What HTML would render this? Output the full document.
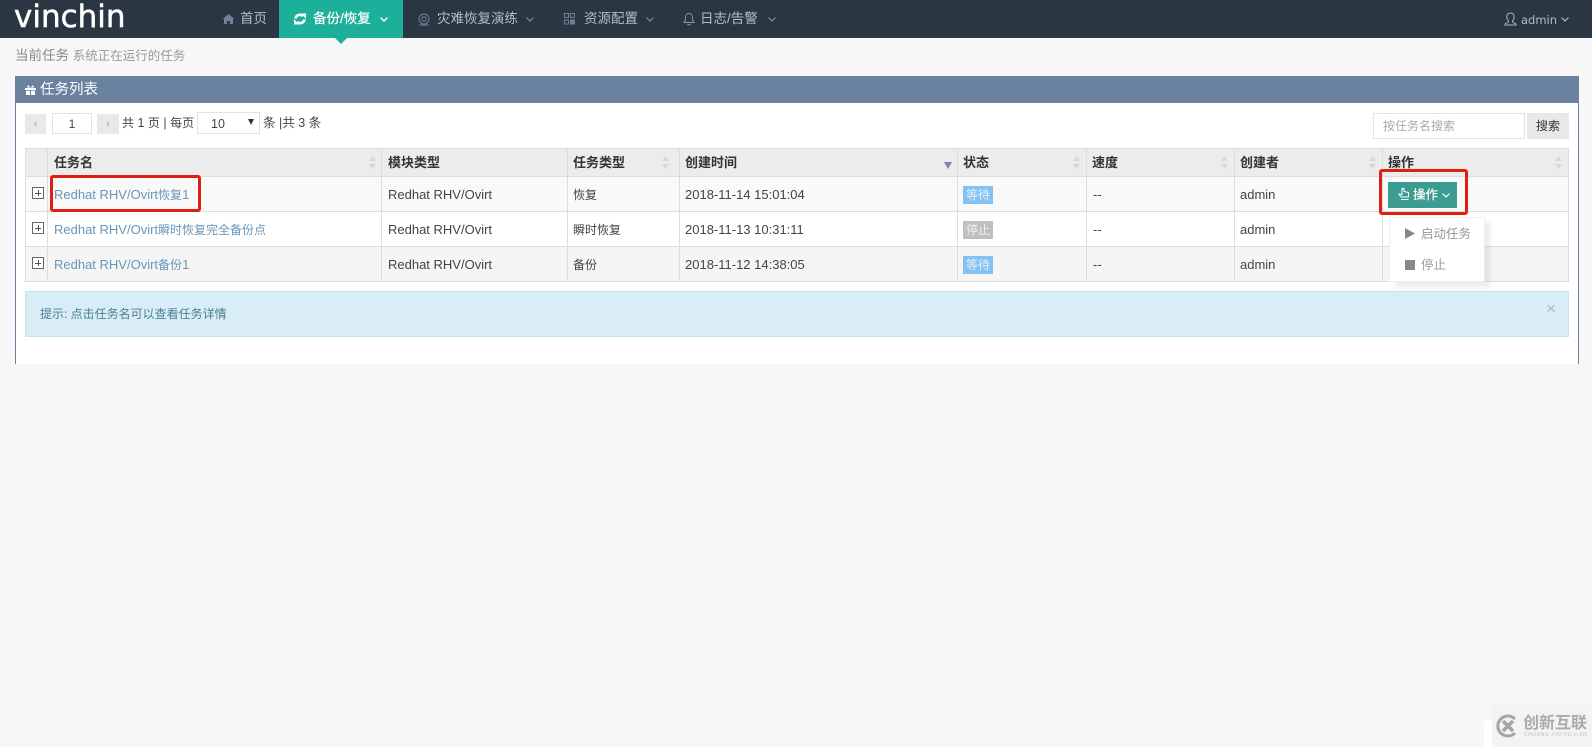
<!DOCTYPE html>
<html lang="zh">
<head>
<meta charset="utf-8">
<title>vinchin</title>
<style>
html,body{margin:0;padding:0}
body{width:1592px;height:747px;background:#f7f7f7;overflow:hidden;position:relative;font-family:"Liberation Sans","Noto Sans CJK SC",sans-serif;font-size:13px;color:#444}
.a{position:absolute;white-space:nowrap}
.nav{left:0;top:0;width:1592px;height:38px;background:#2b3643}
.nt{color:#b4bcc8;font-size:13.5px;line-height:38px;top:0}
.line{position:absolute;background:#ddd}
.th{font-weight:700;color:#333;top:154px;line-height:18px;font-size:13px}
.td{color:#444;line-height:18px}
.lnk{color:#6a96b8;line-height:18px}
.c{font-size:12px}
.bd{color:#e6f2fb;font-size:12px;line-height:18px;width:30px;height:18px;text-align:center;left:963px}
.pm{left:32px;width:10px;height:10px;border:1px solid #666;background:#fff;box-sizing:content-box}
.pm:before{content:"";position:absolute;left:2px;top:4.500px;width:6px;height:1px;background:#555}
.pm:after{content:"";position:absolute;left:4.500px;top:2px;width:1px;height:6px;background:#555}
svg{position:absolute;overflow:visible}
</style>
</head>
<body>
<div class="a nav"></div>
<div class="a" style="left:14px;top:-3px;font-size:31px;line-height:40px;color:#fff;font-family:'DejaVu Sans',sans-serif;-webkit-text-stroke:.5px #fff">vinchin</div>

<svg style="left:222px;top:13px" width="13" height="12" viewBox="0 0 13 12"><path d="M6.500 1 L0.500 6 L2 6 L2 11 L5 11 L5 8 L8 8 L8 11 L11 11 L11 6 L12.500 6 Z" fill="#6f8098"/></svg>
<div class="a nt" style="left:240px">首页</div>

<div class="a" style="left:279px;top:0;width:124px;height:38px;background:#1caf9a"></div>
<div class="a" style="left:335px;top:38px;width:0;height:0;border-left:6px solid transparent;border-right:6px solid transparent;border-top:6px solid #1caf9a"></div>
<svg style="left:293px;top:13px" width="14" height="12" viewBox="0 0 14 12"><path d="M2.500 5.500 A4.500 4.500 0 0 1 10 3 M11.500 6.500 A4.500 4.500 0 0 1 4 9" fill="none" stroke="#fff" stroke-width="2.600"/><path d="M8 0.500 L13 0.500 L13 6 Z M6 11.500 L1 11.500 L1 6 Z" fill="#fff"/></svg>
<div class="a nt" style="left:313px;color:#fff;font-size:13.500px;-webkit-text-stroke:.2px #fff">备份/恢复</div>
<svg style="left:380px;top:17px" width="8" height="5" viewBox="0 0 8 5"><path d="M.500 .500 L4 4 L7.500 .500" fill="none" stroke="#fff" stroke-width="1.400"/></svg>

<svg style="left:418px;top:13px" width="12" height="13" viewBox="0 0 12 13"><circle cx="6" cy="6" r="5" fill="none" stroke="#6f8098"/><circle cx="6" cy="6" r="2.200" fill="none" stroke="#6f8098"/><path d="M1 12 L11 12" stroke="#6f8098"/></svg>
<div class="a nt" style="left:437px">灾难恢复演练</div>
<svg style="left:526px;top:17px" width="8" height="5" viewBox="0 0 8 5"><path d="M.500 .500 L4 4 L7.500 .500" fill="none" stroke="#7f8b9a" stroke-width="1.200"/></svg>

<svg style="left:564px;top:13px" width="11" height="12" viewBox="0 0 11 12"><path d="M.500 .500 H4.500 V4.500 H.500 Z M6.500 .500 H10.500 V4.500 H6.500 Z M.500 7 H4.500 V11 H.500 Z" fill="none" stroke="#6f8098"/><path d="M6 6.500 H11 V11.500 H6 Z" fill="#6f8098"/></svg>
<div class="a nt" style="left:584px">资源配置</div>
<svg style="left:646px;top:17px" width="8" height="5" viewBox="0 0 8 5"><path d="M.500 .500 L4 4 L7.500 .500" fill="none" stroke="#7f8b9a" stroke-width="1.200"/></svg>

<svg style="left:683px;top:12px" width="12" height="14" viewBox="0 0 12 14"><path d="M1 10.500 C2.500 9 2.500 8 2.500 5.500 C2.500 3 4 1.500 6 1.500 C8 1.500 9.500 3 9.500 5.500 C9.500 8 9.500 9 11 10.500 Z M4.500 12 C5 13.200 7 13.200 7.500 12" fill="none" stroke="#8794a5"/></svg>
<div class="a nt" style="left:700px">日志/告警</div>
<svg style="left:768px;top:17px" width="8" height="5" viewBox="0 0 8 5"><path d="M.500 .500 L4 4 L7.500 .500" fill="none" stroke="#7f8b9a" stroke-width="1.200"/></svg>

<svg style="left:1504px;top:12px" width="13" height="14" viewBox="0 0 13 14"><path d="M4.500 9 C3 7.500 2.800 6 2.800 4.800 C2.800 2.500 4.300 1 6.500 1 C8.700 1 10.200 2.500 10.200 4.800 C10.200 6 10 7.500 8.500 9 L8.500 10 L12 12 L12 13 L1 13 L1 12 L4.500 10 Z" fill="none" stroke="#aeb7c3"/></svg>
<div class="a nt" style="left:1521px;top:1px;font-family:'DejaVu Sans',sans-serif;font-size:11.500px">admin</div>
<svg style="left:1561px;top:17px" width="8" height="5" viewBox="0 0 8 5"><path d="M.500 .500 L4 4 L7.500 .500" fill="none" stroke="#aeb7c3" stroke-width="1.200"/></svg>

<div class="a" style="left:15px;top:46px;line-height:20px;font-size:13.500px;color:#888">当前任务 <span style="font-size:12.500px;color:#999">系统正在运行的任务</span></div>

<div class="a" style="left:15px;top:76px;width:1564px;height:288px;background:#fff;box-sizing:border-box;border-left:1px solid #6a819f;border-right:1px solid #6a819f"></div>
<div class="a" style="left:15px;top:76px;width:1564px;height:27px;background:#6a819f"></div>
<svg style="left:25px;top:85px" width="11" height="10" viewBox="0 0 11 10"><path d="M0 3 H11 V5 H0 Z M1 5.800 H5 V10 H1 Z M6 5.800 H10 V10 H6 Z M3 0 L5.500 2.500 L8 0 L9 2.500 L2 2.500 Z" fill="#fff"/></svg>
<div class="a" style="left:40px;top:80px;color:#fff;font-size:14.500px;line-height:20px">任务列表</div>

<div class="a" style="left:25px;top:114px;width:21px;height:20px;background:#e9e9e9;color:#999;text-align:center;line-height:20px;font-size:11px">‹</div>
<div class="a" style="left:52px;top:113px;width:40px;height:21px;box-sizing:border-box;border:1px solid #e2e2e2;background:#fff;text-align:center;line-height:21px;font-size:12px;color:#444">1</div>
<div class="a" style="left:97px;top:114px;width:22px;height:20px;background:#e9e9e9;color:#999;text-align:center;line-height:20px;font-size:11px">›</div>
<div class="a td" style="left:122px;top:114px;font-size:12.500px"><span class="c">共</span> 1 <span class="c">页</span> | <span class="c">每页</span></div>
<div class="a" style="left:197px;top:112px;width:63px;height:22px;box-sizing:border-box;border:1px solid #e2e2e2;background:#fff;line-height:23px;font-size:12.500px;color:#444;padding-left:13px">10</div>
<div class="a" style="left:248px;top:119px;width:0;height:0;border-left:3.500px solid transparent;border-right:3.500px solid transparent;border-top:6px solid #333"></div>
<div class="a td" style="left:263px;top:114px;font-size:12.500px">条 |共 3 条</div>

<div class="a" style="left:1373px;top:113px;width:152px;height:26px;box-sizing:border-box;border:1px solid #e2e2e2;background:#fff;color:#aaa;font-size:12px;line-height:24px;padding-left:9px">按任务名搜索</div>
<div class="a" style="left:1527px;top:113px;width:42px;height:26px;background:#e8e8e8;color:#333;font-size:12px;line-height:26px;text-align:center">搜索</div>

<div class="a" style="left:25px;top:148px;width:1544px;height:29px;background:#ececec"></div>
<div class="a" style="left:25px;top:177px;width:1544px;height:34px;background:#f9f9f9"></div>
<div class="a" style="left:25px;top:212px;width:1544px;height:34px;background:#fff"></div>
<div class="a" style="left:25px;top:247px;width:1544px;height:34px;background:#f5f5f5"></div>

<div class="line" style="left:25px;top:148px;width:1544px;height:1px"></div>
<div class="line" style="left:25px;top:176px;width:1544px;height:1px"></div>
<div class="line" style="left:25px;top:211px;width:1544px;height:1px"></div>
<div class="line" style="left:25px;top:246px;width:1544px;height:1px"></div>
<div class="line" style="left:25px;top:281px;width:1544px;height:1px"></div>
<div class="line" style="left:25px;top:148px;width:1px;height:134px"></div>
<div class="line" style="left:47px;top:148px;width:1px;height:134px"></div>
<div class="line" style="left:381px;top:148px;width:1px;height:134px"></div>
<div class="line" style="left:567px;top:148px;width:1px;height:134px"></div>
<div class="line" style="left:679px;top:148px;width:1px;height:134px"></div>
<div class="line" style="left:957px;top:148px;width:1px;height:134px"></div>
<div class="line" style="left:1086px;top:148px;width:1px;height:134px"></div>
<div class="line" style="left:1234px;top:148px;width:1px;height:134px"></div>
<div class="line" style="left:1382px;top:148px;width:1px;height:134px"></div>
<div class="line" style="left:1568px;top:148px;width:1px;height:134px"></div>

<div class="a th" style="left:54px">任务名</div>
<div class="a th" style="left:388px">模块类型</div>
<div class="a th" style="left:573px">任务类型</div>
<div class="a th" style="left:685px">创建时间</div>
<div class="a th" style="left:963px">状态</div>
<div class="a th" style="left:1092px">速度</div>
<div class="a th" style="left:1240px">创建者</div>
<div class="a th" style="left:1388px">操作</div>

<svg style="left:369px;top:156px" width="7" height="13" viewBox="0 0 7 13"><path d="M3.500 0 L7 5 L0 5 Z M3.500 13 L7 8 L0 8 Z" fill="#d8d8d8"/></svg>
<svg style="left:662px;top:156px" width="7" height="13" viewBox="0 0 7 13"><path d="M3.500 0 L7 5 L0 5 Z M3.500 13 L7 8 L0 8 Z" fill="#d8d8d8"/></svg>
<svg style="left:1073px;top:156px" width="7" height="13" viewBox="0 0 7 13"><path d="M3.500 0 L7 5 L0 5 Z M3.500 13 L7 8 L0 8 Z" fill="#d8d8d8"/></svg>
<svg style="left:1221px;top:156px" width="7" height="13" viewBox="0 0 7 13"><path d="M3.500 0 L7 5 L0 5 Z M3.500 13 L7 8 L0 8 Z" fill="#d8d8d8"/></svg>
<svg style="left:1369px;top:156px" width="7" height="13" viewBox="0 0 7 13"><path d="M3.500 0 L7 5 L0 5 Z M3.500 13 L7 8 L0 8 Z" fill="#d8d8d8"/></svg>
<svg style="left:1555px;top:156px" width="7" height="13" viewBox="0 0 7 13"><path d="M3.500 0 L7 5 L0 5 Z M3.500 13 L7 8 L0 8 Z" fill="#d8d8d8"/></svg>
<svg style="left:944px;top:162px" width="8" height="7" viewBox="0 0 8 7"><path d="M0 0 H8 L4 7 Z" fill="#7b83c0"/></svg>

<div class="a pm" style="top:187px"></div>
<div class="a pm" style="top:222px"></div>
<div class="a pm" style="top:257px"></div>

<div class="a lnk" style="left:54px;top:186px">Redhat RHV/Ovirt<span class="c">恢复</span>1</div>
<div class="a lnk" style="left:54px;top:221px">Redhat RHV/Ovirt<span class="c">瞬时恢复完全备份点</span></div>
<div class="a lnk" style="left:54px;top:256px">Redhat RHV/Ovirt<span class="c">备份</span>1</div>

<div class="a td" style="left:388px;top:186px">Redhat RHV/Ovirt</div>
<div class="a td" style="left:388px;top:221px">Redhat RHV/Ovirt</div>
<div class="a td" style="left:388px;top:256px">Redhat RHV/Ovirt</div>

<div class="a td c" style="left:573px;top:186px">恢复</div>
<div class="a td c" style="left:573px;top:221px">瞬时恢复</div>
<div class="a td c" style="left:573px;top:256px">备份</div>

<div class="a td" style="left:685px;top:186px">2018-11-14 15:01:04</div>
<div class="a td" style="left:685px;top:221px">2018-11-13 10:31:11</div>
<div class="a td" style="left:685px;top:256px">2018-11-12 14:38:05</div>

<div class="a bd" style="top:186px;background:#84c1f0">等待</div>
<div class="a bd" style="top:221px;background:#c0c0c0">停止</div>
<div class="a bd" style="top:256px;background:#84c1f0">等待</div>

<div class="a td" style="left:1093px;top:186px">--</div>
<div class="a td" style="left:1093px;top:221px">--</div>
<div class="a td" style="left:1093px;top:256px">--</div>

<div class="a td" style="left:1240px;top:186px">admin</div>
<div class="a td" style="left:1240px;top:221px">admin</div>
<div class="a td" style="left:1240px;top:256px">admin</div>

<div class="a" style="left:1388px;top:182px;width:69px;height:26px;background:#3d9c91"></div>
<svg style="left:1398px;top:187px" width="12" height="15" viewBox="0 0 12 15"><path d="M4 1.500 L6 1.500 L6 4.500 L10.500 5.500 L10.500 10 L3 10 L1 7 L4 7.500 Z M3 12.500 H10.500" fill="none" stroke="#fff"/></svg>
<div class="a" style="left:1413px;top:186px;color:#fff;font-size:12.500px;line-height:18px;-webkit-text-stroke:.2px #fff">操作</div>
<svg style="left:1442px;top:193px" width="8" height="5" viewBox="0 0 8 5"><path d="M.500 .500 L4 4 L7.500 .500" fill="none" stroke="#fff" stroke-width="1.200"/></svg>

<div class="a" style="left:1389px;top:217px;width:94px;height:63px;background:#fff;border:1px solid #eee;box-shadow:5px 5px 5px rgba(0,0,0,.08)"></div>
<svg style="left:1405px;top:228px" width="10" height="11" viewBox="0 0 10 11"><path d="M0 0 L10 5.500 L0 11 Z" fill="#888"/></svg>
<div class="a" style="left:1421px;top:224px;color:#999;font-size:12.500px;line-height:20px">启动任务</div>
<div class="a" style="left:1405px;top:260px;width:10px;height:10px;background:#888"></div>
<div class="a" style="left:1421px;top:255px;color:#999;font-size:12.500px;line-height:20px">停止</div>

<div class="a" style="left:25px;top:291px;width:1544px;height:46px;box-sizing:border-box;background:#d9edf7;border:1px solid #c5e3ea"></div>
<div class="a" style="left:40px;top:304px;color:#4a7f93;font-size:12px;line-height:20px">提示: 点击任务名可以查看任务详情</div>
<div class="a" style="left:1546px;top:300px;color:#a5bcc6;font-size:17px;line-height:18px">×</div>

<div class="a" style="left:50px;top:175px;width:151px;height:37px;box-sizing:border-box;border:3px solid #e01e14;border-radius:3px"></div>
<div class="a" style="left:1379px;top:169px;width:89px;height:46px;box-sizing:border-box;border:3px solid #e01e14;border-radius:3px"></div>

<div class="a" style="left:1492px;top:703px;width:100px;height:44px;background:#f3f3f3"></div>
<div class="a" style="left:1484px;top:721px;width:8px;height:26px;background:#fff"></div>
<svg style="left:1495px;top:714px" width="24" height="24" viewBox="0 0 24 24"><path d="M20 5 A10 10 0 1 0 20 19" fill="none" stroke="#a5a5a5" stroke-width="3"/><path d="M8 7 L18 17 M18 7 L8 17" stroke="#a5a5a5" stroke-width="3.500"/></svg>
<div class="a" style="left:1523px;top:715px;color:#aaa;font-size:16px;line-height:18px;font-weight:700">创新互联</div>
<div class="a" style="left:1524px;top:732px;color:#c0c0c0;font-size:5px;line-height:6px;letter-spacing:.6px">CHUANG XIN HU LIAN</div>
</body>
</html>
